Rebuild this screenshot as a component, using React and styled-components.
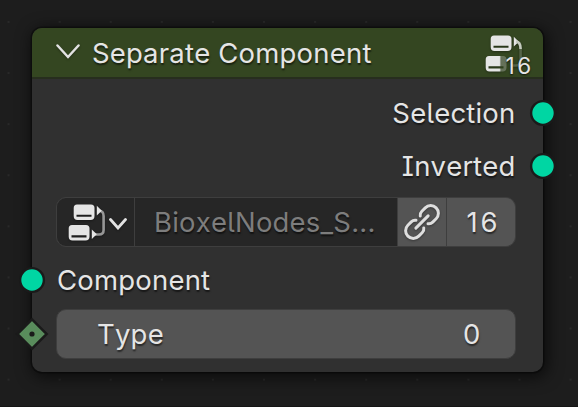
import React from "react";
import styled, { createGlobalStyle } from "styled-components";

const GlobalStyle = createGlobalStyle`
  html, body { margin: 0; padding: 0; background: #1d1d1d; }
  * { box-sizing: border-box; }
`;

const Canvas = styled.main`
  width: 578px;
  height: 407px;
  overflow: hidden;
  padding: 28px 0 0 32px;
  border-bottom: 1px solid #151515;
  background-color: #1d1d1d;
  background-image: radial-gradient(circle, #292929 0.9px, transparent 1.5px);
  background-size: 51.1px 51.1px;
  background-position: -17px -3.6px;
  font-family: "Inter", "Liberation Sans", sans-serif;
  font-feature-settings: "cv05", "cv08";
  font-kerning: none;
  font-size: 27.5px;
  color: #e5e5e5;
`;

const Node = styled.section`
  position: relative;
  width: 510.5px;
  height: 344px;
  border-radius: 10px;
  background: #303030;
  box-shadow: 0 0 0 1.5px rgba(0, 0, 0, 0.35), 2px 3px 16px 2px rgba(0, 0, 0, 0.65);
`;

const Header = styled.header`
  display: flex;
  align-items: center;
  height: 51px;
  padding: 0 12px 2px 24px;
  border-bottom: 2px solid #272e1e;
  border-radius: 10px 10px 0 0;
  background: #344621;
`;

const Label = styled.span`
  line-height: 34px;
  white-space: nowrap;
  letter-spacing: 0.2px;
  color: ${(p) => (p.$muted ? "#7d7d7d" : "#e5e5e5")};
  text-shadow: 0.5px 1.5px 1.5px rgba(0, 0, 0, 0.55);
`;

const Title = styled(Label)`
  flex: 1;
  margin: 2px 0 0 12px;
`;

const Count = styled(Label)`
  letter-spacing: 3px;
  margin-left: 5px;
`;

const Users = styled.div`
  position: relative;
  width: 46px;
  height: 37px;
  margin-top: 4px;
`;

const UserCount = styled.span`
  position: absolute;
  right: -3px;
  top: 18px;
  font-size: 22.5px;
  line-height: 26px;
  letter-spacing: 2.4px;
  text-shadow: 0 1px 2px rgba(0, 0, 0, 0.75);
`;

const Body = styled.div`
  display: flex;
  flex-direction: column;
  padding: 7px 27px 0 25px;
`;

const SocketRow = styled.div`
  display: flex;
  align-items: center;
  justify-content: ${(p) => (p.$output ? "flex-end" : "flex-start")};
  height: 53px;
  position: relative;
`;

const Socket = styled.svg`
  position: absolute;
  ${(p) => (p.$output ? "right: -43px;" : "left: -41px;")}
  top: 50%;
  width: 32px;
  height: 32px;
  margin-top: -16px;
  overflow: visible;
`;

const GroupField = styled.div`
  display: flex;
  height: 50px;
  margin: 5px 0 6px -1px;
  border: 1px solid #3e3e3e;
  border-radius: 10px;
  overflow: hidden;
  background: #3e3e3e;
  gap: 1px;
`;

const Segment = styled.div`
  display: flex;
  align-items: center;
  justify-content: ${(p) => p.$align || "center"};
  width: ${(p) => p.$width};
  flex: none;
  padding-left: ${(p) => p.$indent || "0"};
  background: ${(p) => (p.$raised ? "#545454" : "#262626")};
`;

const MenuChevron = styled.div`
  margin: 3px 0 0 3px;
`;

const NumberRow = styled(SocketRow)`
  height: 50px;
  margin: 3px 0 0 -1px;
`;

const NumberField = styled.div`
  display: flex;
  align-items: center;
  justify-content: space-between;
  flex: 1;
  height: 50px;
  padding: 0 34px 0 40px;
  border: 1px solid #3e3e3e;
  border-radius: 10px;
  background: #545454;
`;

const Icon = styled.svg`
  flex: none;
  display: block;
  filter: drop-shadow(0 1px 1px rgba(0, 0, 0, 0.35));
`;

const Chevron = ({ width, height, stroke }) => (
  <Icon width={width} height={height} viewBox={`0 0 ${width} ${height}`} fill="none">
    <path
      d={`M1.5 1.5 L${width / 2} ${height - 2} L${width - 1.5} 1.5`}
      stroke="#e2e2e2"
      strokeWidth={stroke}
      strokeLinecap="round"
      strokeLinejoin="miter"
    />
  </Icon>
);

const NodeTree = ({ faded }) => (
  <Icon width="38" height="37" viewBox="0 0 38 37">
    {faded && (
      <defs>
        <linearGradient id="block-fade">
          <stop offset="0.66" stopColor="#e5e5e5" />
          <stop offset="0.74" stopColor="#e5e5e5" stopOpacity="0.3" />
        </linearGradient>
      </defs>
    )}
    <path
      fill="#e5e5e5"
      fillRule="evenodd"
      d="M9 .5H23Q26.5 .5 26.5 4V12Q26.5 16 22.5 16H9.5Q5.7 16 5.7 12V4Q5.7 .5 9 .5ZM8.5 10.7V12.8H23.5V10.7Z"
    />
    <path
      fill={faded ? "url(#block-fade)" : "#e5e5e5"}
      fillRule="evenodd"
      d="M4 21H18Q21.5 21 21.5 24.5V32.5Q21.5 36.5 17.5 36.5H4.5Q.7 36.5 .7 32.5V24.5Q.7 21 4 21ZM3.5 31.2V33.5H18.5V31.2Z"
    />
    <path
      d="M31 6.5Q35.6 7 35.6 12V26Q35.6 30.5 31 30.5H27"
      fill="none"
      stroke={faded ? "#556448" : "#969696"}
      strokeWidth="2.6"
    />
    <path fill="#e5e5e5" d="M28.8 1.8L33.8 6.8L28.8 11.5Z" />
    {faded ? (
      <path d="M31 6.5Q35.6 7 35.6 14" fill="none" stroke="#c5cbbf" strokeWidth="2.6" />
    ) : (
      <path fill="#e5e5e5" d="M23.8 25.5L28.8 30.3L23.8 35Z" />
    )}
  </Icon>
);

const Link = () => (
  <Icon width="38" height="38" viewBox="0 0 38 38">
    <g
      transform="translate(19 19) rotate(-45)"
      fill="none"
      stroke="#dedede"
      strokeWidth="3"
      strokeLinecap="round"
    >
      <path d="M-8.7 0H8.7" />
      <path d="M-3 -5.5Q-4.5 -7.7 -7.5 -7.7H-12.3A7.7 7.7 0 0 0 -12.3 7.7H-7.5Q-4.5 7.7 -3 5.5" />
      <path d="M3 -5.5Q4.5 -7.7 7.5 -7.7H12.3A7.7 7.7 0 0 1 12.3 7.7H7.5Q4.5 7.7 3 5.5" />
    </g>
  </Icon>
);

const GeometrySocket = ({ output }) => (
  <Socket $output={output} viewBox="-16 -16 32 32">
    <circle r="11.9" fill="#00d6a3" stroke="#1a1a1a" strokeWidth="2.4" />
  </Socket>
);

const IntegerSocket = () => (
  <Socket viewBox="-17 -16 32 32">
    <path d="M0-14.7L14.7 0L0 14.7L-14.7 0Z" fill="#598c5c" stroke="#1a1a1a" strokeWidth="2.5" />
    <circle r="2.6" fill="#1a1a1a" />
  </Socket>
);

export default function App() {
  return (
    <>
      <GlobalStyle />
      <Canvas>
        <Node>
          <Header>
            <Chevron width={24} height={15} stroke={2.5} />
            <Title>Separate Component</Title>
            <Users>
              <NodeTree faded />
              <UserCount>16</UserCount>
            </Users>
          </Header>
          <Body>
            <SocketRow $output>
              <Label>Selection</Label>
              <GeometrySocket output />
            </SocketRow>
            <SocketRow $output>
              <Label>Inverted</Label>
              <GeometrySocket output />
            </SocketRow>
            <GroupField>
              <Segment $width="77px" $align="flex-start" $indent="11px">
                <NodeTree />
                <MenuChevron>
                  <Chevron width={18} height={12} stroke={2.8} />
                </MenuChevron>
              </Segment>
              <Segment $width="262px" $align="flex-start" $indent="19px">
                <Label $muted>BioxelNodes_S...</Label>
              </Segment>
              <Segment $width="48px" $raised>
                <Link />
              </Segment>
              <Segment $width="68px" $raised>
                <Count>16</Count>
              </Segment>
            </GroupField>
            <SocketRow>
              <Label>Component</Label>
              <GeometrySocket />
            </SocketRow>
            <NumberRow>
              <NumberField>
                <Label>Type</Label>
                <Label>0</Label>
              </NumberField>
              <IntegerSocket />
            </NumberRow>
          </Body>
        </Node>
      </Canvas>
    </>
  );
}
